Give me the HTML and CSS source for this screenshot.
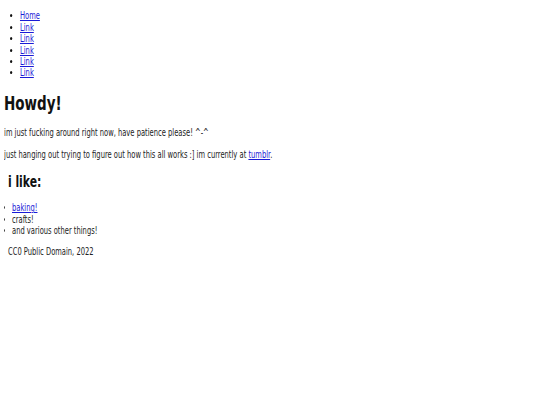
FILE: index.html
```html
<!DOCTYPE html>
<html>
<head>
<meta charset="utf-8">
<link rel="stylesheet" href="styles.css">
</head>
<body>
<div class="page">
<nav class="nav">
  <ul class="nav-list">
    <li><a href="#">Home</a></li>
    <li><a href="#">Link</a></li>
    <li><a href="#">Link</a></li>
    <li><a href="#">Link</a></li>
    <li><a href="#">Link</a></li>
    <li><a href="#">Link</a></li>
  </ul>
</nav>
<main class="main">
  <h1 class="title">Howdy!</h1>
  <p class="text">im just fucking around right now, have patience please! ^-^</p>
  <p class="text">just hanging out trying to figure out how this all works :] im currently at <a href="#">tumblr</a>.</p>
  <h2 class="subtitle">i like:</h2>
  <ul class="likes">
    <li><a href="#">baking!</a></li>
    <li>crafts!</li>
    <li>and various other things!</li>
  </ul>
  <footer class="footer">CC0 Public Domain, 2022</footer>
</main>
</div>
</body>
</html>
```
FILE: styles.css
```css
body {
  margin: 4px;
  font-family: "DejaVu Sans Condensed", "DejaVu Sans", sans-serif;
  font-stretch: condensed;
  font-size: 10px;
  line-height: 11.4px;
  color: #222;
  background: #fff;
}
.page {
  width: 520px;
  transform: scaleX(0.75);
  transform-origin: 0 0;
}
a { color: #1a1ad6; }
li::marker { color: #111; }
.nav-list {
  margin: 6.3px 0 0 0;
  padding-left: 21.3px;
}
.title {
  font-size: 20px;
  line-height: 24px;
  margin: 12.3px 0 0 0;
  color: #111;
}
.text {
  margin: 12.3px 0 0 0;
}
.text + .text { margin-top: 10.6px; }
.subtitle {
  font-size: 16px;
  line-height: 19px;
  margin: 10.8px 0 0 5.3px;
  color: #111;
}
.likes {
  margin: 11.8px 0 0 0;
  padding-left: 10.7px;
}
.footer {
  margin: 9.8px 0 0 5.3px;
}
```
